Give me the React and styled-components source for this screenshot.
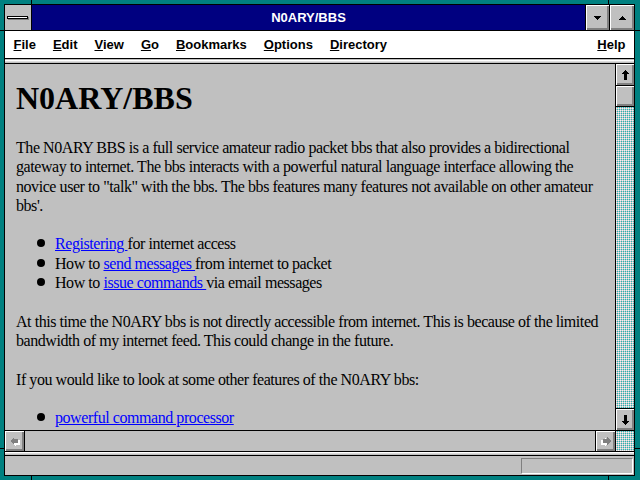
import React from "react";
import styled, { createGlobalStyle } from "styled-components";

const GlobalStyle = createGlobalStyle`
  html, body { margin: 0; padding: 0; width: 640px; height: 480px; overflow: hidden; background: #008080; }
  #root { width: 640px; height: 480px; }
`;

const Frame = styled.div`
  position: relative;
  width: 640px;
  height: 480px;
  box-sizing: border-box;
  padding: 4px 5px 4px 4px;
  background: #008080;
`;

const Notch = styled.span`
  position: absolute;
  background: #000;
  left: ${(p) => p.$x}px;
  top: ${(p) => p.$y}px;
  width: ${(p) => p.$w}px;
  height: ${(p) => p.$h}px;
`;

const Window = styled.div`
  height: 100%;
  box-sizing: border-box;
  border: 1px solid #000;
  display: flex;
  flex-direction: column;
  background: #c0c0c0;
`;

const TitleBar = styled.div`
  display: flex;
  height: 25px;
  border-bottom: 1px solid #000;
  flex-shrink: 0;
`;

const SysBox = styled.div`
  width: 26px;
  border-right: 1px solid #000;
  background: #c0c0c0;
  display: flex;
  align-items: center;
  justify-content: center;
`;

const SysBar = styled.span`
  display: block;
  width: 19px;
  height: 1px;
  background: #fff;
  border: 1px solid #000;
  box-shadow: 1px 1px 0 #808080;
  margin: 0 1px 1px 0;
`;

const Title = styled.div`
  flex: 1;
  background: #000080;
  color: #fff;
  font: bold 13px "Liberation Sans", Arial, sans-serif;
  display: flex;
  align-items: center;
  justify-content: center;
`;

const Bevel = `
  background: #c0c0c0;
  box-shadow: inset 1px 1px 0 #fff, inset -1px -1px 0 #808080, inset -2px -2px 0 #808080;
  display: flex;
  align-items: center;
  justify-content: center;
  box-sizing: border-box;
`;

const TitleButton = styled.div`
  ${Bevel}
  width: ${(p) => p.$w}px;
  border-left: 1px solid #000;
  box-sizing: content-box;
`;

const MenuBar = styled.div`
  display: flex;
  align-items: center;
  height: 27px;
  background: #fff;
  border-bottom: 1px solid #000;
  font: bold 13px "Liberation Sans", Arial, sans-serif;
  color: #000;
  flex-shrink: 0;
`;

const MenuItem = styled.span`
  padding: 0 8.5px;
  margin-left: ${(p) => (p.$right ? "auto" : "0")};
  u { text-underline-offset: 1px; }
`;

const ToolStrip = styled.div`
  height: 4px;
  flex-shrink: 0;
  background: linear-gradient(#c0c0c0 0 1px, #fff 1px 2px, #dcdcdc 2px 3px, #c0c0c0 3px);
  border-bottom: 1px solid #000;
`;

const Main = styled.div`
  flex: 1;
  display: flex;
  min-height: 0;
  border-bottom: 1px solid #000;
`;

const Page = styled.div`
  flex: 1;
  overflow: hidden;
  padding: 0 10px 0 11px;
  font-family: "Liberation Serif", "Times New Roman", serif;
  font-size: 16px;
  line-height: 19.3px;
  color: #000;
  background: #c0c0c0;
`;

const Heading = styled.h1`
  margin: 16px 0 21px;
  font-size: 32px;
  line-height: 37px;
  font-weight: bold;
`;

const Para = styled.p`
  margin: 0 0 19.3px;
  letter-spacing: -0.44px;
`;

const List = styled.ul`
  margin: 0 0 19.3px;
  padding: 0 0 0 21px;
  list-style: none;
  letter-spacing: -0.44px;
`;

const Item = styled.li`
  display: flex;
  align-items: flex-start;
`;

const Bullet = styled.span`
  flex-shrink: 0;
  width: 8px;
  height: 8px;
  border-radius: 50%;
  background: #000;
  margin: 5px 10px 0 0;
`;

const Link = styled.a`
  color: #0000ff;
  text-decoration: underline;
`;

const Dither = `
  background-color: #a8a8a8;
  background-image: conic-gradient(#20b8b8 0 25%, #c8c8c8 0 50%, #f4f4f4 0 75%, #c8c8c8 0);
  background-size: 2px 2px;
`;

const VScroll = styled.div`
  width: 18px;
  border-left: 1px solid #000;
  display: flex;
  flex-direction: column;
`;

const ScrollButton = styled.div`
  ${Bevel}
  flex-shrink: 0;
  height: ${(p) => p.$h}px;
  width: ${(p) => p.$w || 18}px;
`;

const Thumb = styled.div`
  ${Bevel}
  height: 20px;
  flex-shrink: 0;
  border-top: 1px solid #000;
  border-bottom: 1px solid #000;
  box-sizing: content-box;
`;

const Track = styled.div`
  flex: 1;
  ${Dither}
`;

const DownWrap = styled.div`
  border-top: 1px solid #000;
`;

const HScroll = styled.div`
  display: flex;
  height: 20px;
  flex-shrink: 0;
  border-bottom: 1px solid #000;
`;

const HTrack = styled.div`
  flex: 1;
  background: #c0c0c0;
  border-left: 1px solid #000;
  border-right: 1px solid #000;
`;

const Corner = styled.div`
  width: 18px;
  border-left: 1px solid #000;
  ${Dither}
`;

const Strip = styled.div`
  height: 3px;
  flex-shrink: 0;
  background: linear-gradient(#fff 0 1px, #dcdcdc 1px 2px, #c0c0c0 2px);
  border-bottom: 1px solid #000;
`;

const StatusBar = styled.div`
  height: 19px;
  flex-shrink: 0;
  box-sizing: border-box;
  padding: 2px 1px 1px;
  display: flex;
  justify-content: flex-end;
  background: #c0c0c0;
`;

const StatusBox = styled.div`
  width: 112px;
  height: 16px;
  box-sizing: border-box;
  border-top: 1px solid #808080;
  border-left: 1px solid #808080;
  border-bottom: 1px solid #fff;
  border-right: 1px solid #fff;
`;

const Tri = ({ up }) => (
  <svg width="7" height="4" viewBox="0 0 7 4" shapeRendering="crispEdges">
    <polygon points={up ? "3.5,0 7,4 0,4" : "0,0 7,0 3.5,4"} fill="#000" />
  </svg>
);

const VArrow = ({ down }) => (
  <svg width="7" height="10" viewBox="0 0 7 10" shapeRendering="crispEdges">
    <polygon
      points="3.5,0 7,4 5,4 5,10 2,10 2,4 0,4"
      fill="#000"
      transform={down ? "rotate(180 3.5 5)" : undefined}
    />
  </svg>
);

const HArrow = ({ right }) => (
  <svg width="10" height="9" viewBox="0 0 10 9" shapeRendering="crispEdges">
    <g transform={right ? "translate(10 0) scale(-1 1)" : undefined}>
      <polygon points="1,4 5,0 5,2 9,2 9,7 5,7 5,9" fill="#fff" transform="translate(1 1)" />
      <polygon points="0,4 4,0 4,2 8,2 8,6 4,6 4,8" fill="#808080" />
    </g>
  </svg>
);

const menus = ["File", "Edit", "View", "Go", "Bookmarks", "Options", "Directory"];

export default function App() {
  return (
    <>
      <GlobalStyle />
      <Frame>
        <Notch $x={31} $y={0} $w={1} $h={4} />
        <Notch $x={608} $y={0} $w={1} $h={4} />
        <Notch $x={31} $y={476} $w={1} $h={4} />
        <Notch $x={608} $y={476} $w={1} $h={4} />
        <Notch $x={0} $y={30} $w={4} $h={1} />
        <Notch $x={0} $y={448} $w={4} $h={1} />
        <Notch $x={635} $y={30} $w={5} $h={1} />
        <Notch $x={635} $y={448} $w={5} $h={1} />
        <Window>
          <TitleBar>
            <SysBox>
              <SysBar />
            </SysBox>
            <Title>N0ARY/BBS</Title>
            <TitleButton $w={23}>
              <Tri />
            </TitleButton>
            <TitleButton $w={24}>
              <Tri up />
            </TitleButton>
          </TitleBar>
          <MenuBar>
            {menus.map((m) => (
              <MenuItem key={m}>
                <u>{m[0]}</u>
                {m.slice(1)}
              </MenuItem>
            ))}
            <MenuItem $right>
              <u>H</u>elp
            </MenuItem>
          </MenuBar>
          <ToolStrip />
          <Main>
            <Page>
              <Heading>N0ARY/BBS</Heading>
              <Para>
                The N0ARY BBS is a full service amateur radio packet bbs that also provides a
                bidirectional gateway to internet. The bbs interacts with a powerful natural
                language interface allowing the novice user to "talk" with the bbs. The bbs
                features many features not available on other amateur bbs'.
              </Para>
              <List>
                <Item>
                  <Bullet />
                  <span>
                    <Link href="#">Registering </Link>for internet access
                  </span>
                </Item>
                <Item>
                  <Bullet />
                  <span>
                    How to <Link href="#">send messages </Link>from internet to packet
                  </span>
                </Item>
                <Item>
                  <Bullet />
                  <span>
                    How to <Link href="#">issue commands </Link>via email messages
                  </span>
                </Item>
              </List>
              <Para>
                At this time the N0ARY bbs is not directly accessible from internet. This is
                because of the limited bandwidth of my internet feed. This could change in the
                future.
              </Para>
              <Para>If you would like to look at some other features of the N0ARY bbs:</Para>
              <List>
                <Item>
                  <Bullet />
                  <span>
                    <Link href="#">powerful command processor</Link>
                  </span>
                </Item>
              </List>
            </Page>
            <VScroll>
              <ScrollButton $h={21}>
                <VArrow />
              </ScrollButton>
              <Thumb />
              <Track />
              <DownWrap>
                <ScrollButton $h={21}>
                  <VArrow down />
                </ScrollButton>
              </DownWrap>
            </VScroll>
          </Main>
          <HScroll>
            <ScrollButton $h={20} $w={19}>
              <HArrow />
            </ScrollButton>
            <HTrack />
            <ScrollButton $h={20} $w={19}>
              <HArrow right />
            </ScrollButton>
            <Corner />
          </HScroll>
          <Strip />
          <StatusBar>
            <StatusBox />
          </StatusBar>
        </Window>
      </Frame>
    </>
  );
}
